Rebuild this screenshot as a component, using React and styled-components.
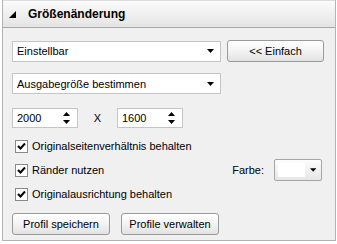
import React from "react";
import styled, { createGlobalStyle } from "styled-components";

const Global = createGlobalStyle`
  body {
    margin: 0;
    background: #ffffff;
    font-family: "Liberation Sans", Arial, sans-serif;
    font-size: 11px;
    color: #000;
  }
`;

const Panel = styled.div`
  margin-left: 2px;
  width: 332px;
  height: 240px;
  border: 1px solid #b4b4b4;
  border-top: none;
  background: #f0f0f0;
  display: flex;
  flex-direction: column;
`;

const Header = styled.div`
  height: 26px;
  display: flex;
  align-items: center;
  gap: 12px;
  padding-left: 6px;
  background: linear-gradient(#fbfbfb, #e4e4e4);
  border-bottom: 1px solid #a8a8a8;
  border-top: 1px solid #dcdcdc;
  font-weight: bold;
  font-size: 12px;
`;

const Body = styled.div`
  display: flex;
  flex-direction: column;
  padding: 12px 0 0 9px;
`;

const Row = styled.div`
  display: flex;
  align-items: center;
  margin-top: ${(p) => p.$mt || 0}px;
  gap: ${(p) => p.$gap || 0}px;
`;

const Combo = styled.div`
  box-sizing: border-box;
  width: 209px;
  height: 21px;
  background: #fff;
  border: 1px solid #c5c5c5;
  display: flex;
  align-items: center;
  justify-content: space-between;
  padding: 0 6px 0 4px;
`;

const Button = styled.button`
  box-sizing: border-box;
  width: ${(p) => p.$w}px;
  height: 22px;
  margin: 0;
  padding: 0;
  border: 1px solid #9a9a9a;
  border-radius: 3px;
  background: linear-gradient(#ffffff, #f3f3f3 50%, #e2e2e2);
  font-family: inherit;
  font-size: 11px;
  color: #000;
`;

const Spin = styled.div`
  box-sizing: border-box;
  width: 66px;
  height: 20px;
  background: #fff;
  border: 1px solid #c5c5c5;
  display: flex;
  align-items: center;
  justify-content: space-between;
  padding: 0 7px 0 4px;
`;

const Times = styled.span`
  width: 39px;
  text-align: center;
`;

const Check = styled.label`
  display: flex;
  align-items: center;
  gap: 4px;
  height: 24px;
`;

const Box = styled.span`
  box-sizing: border-box;
  width: 13px;
  height: 13px;
  margin-left: 3px;
  border: 1px solid #8a8a8a;
  background: #fff;
  display: flex;
  align-items: center;
  justify-content: center;
`;

const ColorRow = styled.div`
  display: flex;
  align-items: center;
  justify-content: space-between;
  width: 310px;
`;

const ColorPick = styled.div`
  display: flex;
  align-items: center;
  gap: 10px;
`;

const ColorBtn = styled.div`
  box-sizing: border-box;
  width: 48px;
  height: 22px;
  border: 1px solid #a6a6a6;
  border-radius: 2px;
  background: linear-gradient(#fdfdfd, #e6e6e6);
  display: flex;
  align-items: center;
  padding: 0 5px 0 3px;
  gap: 5px;
`;

const Swatch = styled.span`
  width: 29px;
  height: 14px;
  background: #fff;
`;

const Down = () => (
  <svg width="7" height="4" viewBox="0 0 7 4">
    <path d="M0 0h7L3.5 4z" fill="#000" />
  </svg>
);

const Arrows = () => (
  <svg width="7" height="12" viewBox="0 0 7 12">
    <path d="M3.5 0L7 4H0z M0 8h7l-3.5 4z" fill="#000" />
  </svg>
);

const Tick = () => (
  <svg width="9" height="9" viewBox="0 0 9 9">
    <path d="M1 4l2.5 2.5L8 1.5" stroke="#000" strokeWidth="2" fill="none" />
  </svg>
);

const Corner = () => (
  <svg width="7" height="7" viewBox="0 0 7 7">
    <path d="M7 0v7H0z" fill="#000" />
  </svg>
);

export default function App() {
  return (
    <>
      <Global />
      <Panel>
        <Header>
          <Corner />
          <span>Größenänderung</span>
        </Header>
        <Body>
          <Row $gap={6}>
            <Combo>
              Einstellbar
              <Down />
            </Combo>
            <Button $w={97}>&lt;&lt; Einfach</Button>
          </Row>
          <Row $mt={11}>
            <Combo>
              Ausgabegröße bestimmen
              <Down />
            </Combo>
          </Row>
          <Row $mt={14}>
            <Spin>
              2000
              <Arrows />
            </Spin>
            <Times>X</Times>
            <Spin>
              1600
              <Arrows />
            </Spin>
          </Row>
          <Row $mt={6}>
            <Check>
              <Box>
                <Tick />
              </Box>
              Originalseitenverhältnis behalten
            </Check>
          </Row>
          <ColorRow>
            <Check>
              <Box>
                <Tick />
              </Box>
              Ränder nutzen
            </Check>
            <ColorPick>
              Farbe:
              <ColorBtn>
                <Swatch />
                <Down />
              </ColorBtn>
            </ColorPick>
          </ColorRow>
          <Row>
            <Check>
              <Box>
                <Tick />
              </Box>
              Originalausrichtung behalten
            </Check>
          </Row>
          <Row $mt={7} $gap={11}>
            <Button $w={98}>Profil speichern</Button>
            <Button $w={98}>Profile verwalten</Button>
          </Row>
        </Body>
      </Panel>
    </>
  );
}
